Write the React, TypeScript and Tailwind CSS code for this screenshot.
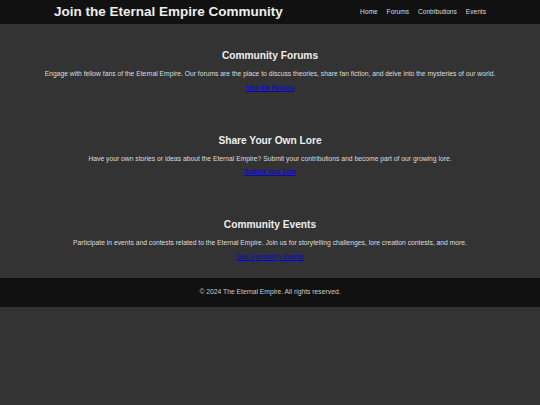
const sections = [
  {
    title: "Community Forums",
    text: "Engage with fellow fans of the Eternal Empire. Our forums are the place to discuss theories, share fan fiction, and delve into the mysteries of our world.",
    link: "Visit the Forums",
  },
  {
    title: "Share Your Own Lore",
    text: "Have your own stories or ideas about the Eternal Empire? Submit your contributions and become part of our growing lore.",
    link: "Submit Your Lore",
  },
  {
    title: "Community Events",
    text: "Participate in events and contests related to the Eternal Empire. Join us for storytelling challenges, lore creation contests, and more.",
    link: "See Upcoming Events",
  },
];

export default function App() {
  return (
    <div className="min-h-[405px] bg-[#333] text-[#ddd] font-['Liberation_Sans',Arial,sans-serif]">
      <header className="bg-[#111] h-[24px]">
        <div className="w-[432px] mx-auto h-full flex items-center justify-between">
          <h1 className="text-[13.5px] font-bold text-[#eee]">Join the Eternal Empire Community</h1>
          <nav className="flex gap-[9px] text-[6.6px] text-[#ddd]">
            <a href="#">Home</a>
            <a href="#">Forums</a>
            <a href="#">Contributions</a>
            <a href="#">Events</a>
          </nav>
        </div>
      </header>

      <main className="pt-[25px] pb-[17.5px] flex flex-col gap-[42px]">
        {sections.map((s) => (
          <section key={s.title} className="text-center flex flex-col items-center">
            <h2 className="text-[10.2px] font-bold text-[#eee] leading-[14px]">{s.title}</h2>
            <p className="text-[6.75px] mt-[6px] leading-[9px]">{s.text}</p>
            <a href="#" className="text-[6.75px] mt-[4.5px] leading-[9px] underline text-[#0000ee]">
              {s.link}
            </a>
          </section>
        ))}
      </main>

      <footer className="bg-[#111] h-[29px] flex items-center justify-center text-[6.75px] text-[#ccc]">
        © 2024 The Eternal Empire. All rights reserved.
      </footer>
    </div>
  );
}
